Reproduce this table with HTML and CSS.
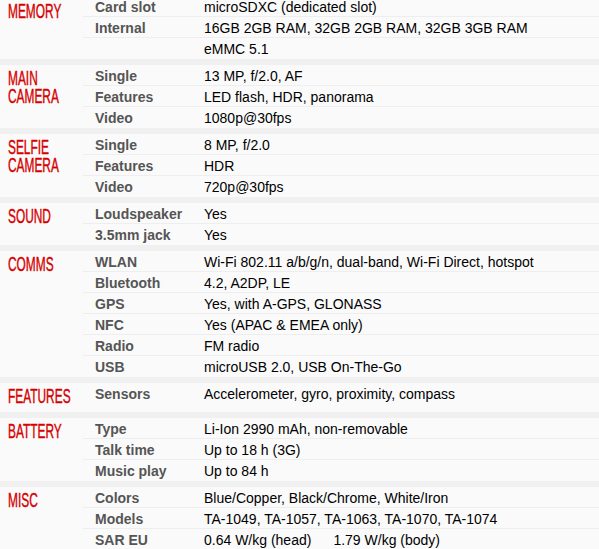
FILE: index.html
```html
<!DOCTYPE html>
<html>
<head>
<meta charset="utf-8">
<link rel="stylesheet" href="styles.css">
</head>
<body>
<div class="specs">
  <section class="sec">
    <div class="head"><span class="ttl">MEMORY</span></div>
    <div class="rows">
      <div class="row"><div class="lbl">Card slot</div><div class="val">microSDXC (dedicated slot)</div></div>
      <div class="row"><div class="lbl">Internal</div><div class="val">16GB 2GB RAM, 32GB 2GB RAM, 32GB 3GB RAM</div></div>
      <div class="row"><div class="lbl"></div><div class="val">eMMC 5.1</div></div>
    </div>
  </section>
  <section class="sec">
    <div class="head"><span class="ttl">MAIN CAMERA</span></div>
    <div class="rows">
      <div class="row"><div class="lbl">Single</div><div class="val">13 MP, f/2.0, AF</div></div>
      <div class="row"><div class="lbl">Features</div><div class="val">LED flash, HDR, panorama</div></div>
      <div class="row"><div class="lbl">Video</div><div class="val">1080p@30fps</div></div>
    </div>
  </section>
  <section class="sec">
    <div class="head"><span class="ttl">SELFIE CAMERA</span></div>
    <div class="rows">
      <div class="row"><div class="lbl">Single</div><div class="val">8 MP, f/2.0</div></div>
      <div class="row"><div class="lbl">Features</div><div class="val">HDR</div></div>
      <div class="row"><div class="lbl">Video</div><div class="val">720p@30fps</div></div>
    </div>
  </section>
  <section class="sec">
    <div class="head"><span class="ttl">SOUND</span></div>
    <div class="rows">
      <div class="row"><div class="lbl">Loudspeaker</div><div class="val">Yes</div></div>
      <div class="row"><div class="lbl">3.5mm jack</div><div class="val">Yes</div></div>
    </div>
  </section>
  <section class="sec">
    <div class="head"><span class="ttl">COMMS</span></div>
    <div class="rows">
      <div class="row"><div class="lbl">WLAN</div><div class="val">Wi-Fi 802.11 a/b/g/n, dual-band, Wi-Fi Direct, hotspot</div></div>
      <div class="row"><div class="lbl">Bluetooth</div><div class="val">4.2, A2DP, LE</div></div>
      <div class="row"><div class="lbl">GPS</div><div class="val">Yes, with A-GPS, GLONASS</div></div>
      <div class="row"><div class="lbl">NFC</div><div class="val">Yes (APAC &amp; EMEA only)</div></div>
      <div class="row"><div class="lbl">Radio</div><div class="val">FM radio</div></div>
      <div class="row"><div class="lbl">USB</div><div class="val">microUSB 2.0, USB On-The-Go</div></div>
    </div>
  </section>
  <section class="sec single">
    <div class="head"><span class="ttl">FEATURES</span></div>
    <div class="rows">
      <div class="row"><div class="lbl">Sensors</div><div class="val">Accelerometer, gyro, proximity, compass</div></div>
    </div>
  </section>
  <section class="sec">
    <div class="head"><span class="ttl">BATTERY</span></div>
    <div class="rows">
      <div class="row"><div class="lbl">Type</div><div class="val">Li-Ion 2990 mAh, non-removable</div></div>
      <div class="row"><div class="lbl">Talk time</div><div class="val">Up to 18 h (3G)</div></div>
      <div class="row"><div class="lbl">Music play</div><div class="val">Up to 84 h</div></div>
    </div>
  </section>
  <section class="sec">
    <div class="head"><span class="ttl">MISC</span></div>
    <div class="rows">
      <div class="row"><div class="lbl">Colors</div><div class="val">Blue/Copper, Black/Chrome, White/Iron</div></div>
      <div class="row"><div class="lbl">Models</div><div class="val">TA-1049, TA-1057, TA-1063, TA-1070, TA-1074</div></div>
      <div class="row"><div class="lbl">SAR EU</div><div class="val">0.64 W/kg (head)<span class="sar2">1.79 W/kg (body)</span></div></div>
    </div>
  </section>
</div>
</body>
</html>
```

FILE: styles.css
```css
html, body {
  margin: 0;
  padding: 0;
  background: #fafafa;
  overflow: hidden;
}
.specs {
  margin-top: -4px;
  display: flex;
  flex-direction: column;
  font-family: "Liberation Sans", Arial, sans-serif;
  font-size: 14px;
}
.sec {
  display: flex;
  background: #fafafa;
  border-bottom: 6px solid #f0f0f0;
}
.head {
  width: 83px;
  flex: none;
  padding: 4px 0 0 8px;
  box-sizing: border-box;
  overflow: visible;
}
.sec:first-child .head {
  padding-top: 6px;
}
.single .head {
  min-height: 29px;
}
.ttl {
  display: inline-block;
  width: 118px;
  font-size: 19.5px;
  line-height: 18px;
  font-weight: normal;
  color: #d50000;
  -webkit-text-stroke: 0.4px #d50000;
  transform: scaleX(0.61);
  transform-origin: left top;
}
.rows {
  flex: 1;
  display: flex;
  flex-direction: column;
}
.row {
  display: grid;
  grid-template-columns: 121px 1fr;
  height: 21px;
  box-sizing: border-box;
  border-bottom: 1px solid #eeeeee;
}
.row:last-child {
  border-bottom: none;
}
.lbl {
  padding: 2px 0 0 12px;
  line-height: 18px;
  font-weight: bold;
  color: #555555;
}
.val {
  padding: 2px 0 0 0;
  line-height: 18px;
  color: #000000;
  white-space: nowrap;
}
.sar2 {
  margin-left: 22px;
}
```
